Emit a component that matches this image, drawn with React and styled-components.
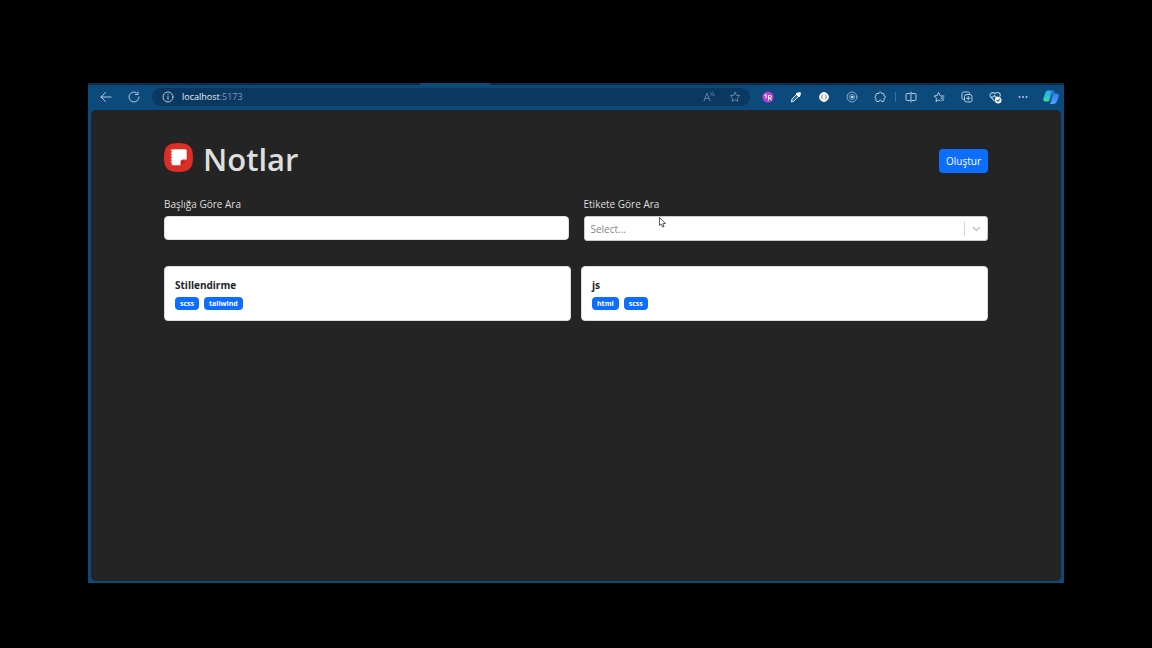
import React from "react";
import styled, { createGlobalStyle } from "styled-components";

const GlobalStyle = createGlobalStyle`
  * { box-sizing: border-box; }
  body {
    margin: 0;
    background: #000;
    font-family: "Open Sans", "Noto Sans", sans-serif;
  }
  button, input, select { font-family: inherit; }
`;

const Desktop = styled.div`
  display: flex;
  flex-direction: column;
  min-height: 100vh;
  padding: 83px 88px 65px;
`;

const BrowserWindow = styled.div`
  flex: 1;
  display: flex;
  flex-direction: column;
  background: #0d4a7c;
`;

const TabStrip = styled.div`
  height: 2px;
  padding-left: 34%;
  background: #082c49;
`;

const ActiveTab = styled.div`
  width: 70px;
  height: 2px;
  background: #0d4a7c;
`;

const Toolbar = styled.div`
  display: flex;
  align-items: center;
  height: 24px;
  padding-left: 4px;
`;

const ToolButton = styled.button`
  display: flex;
  align-items: center;
  justify-content: center;
  width: ${(p) => p.$width || 28}px;
  height: 20px;
  padding: 0;
  border: 0;
  background: none;
  color: ${(p) => (p.$dim ? "#64839f" : "#b4cbe0")};
`;

const AddressBar = styled.div`
  flex: 1;
  display: flex;
  align-items: center;
  height: 18px;
  margin: 0 4px;
  padding: 0 1px 0 2px;
  border-radius: 9px;
  background: #0a3860;
`;

const Address = styled.div`
  flex: 1;
  color: #7f9bb5;
  font-size: 9px;
  line-height: 16px;
  span { color: #e6eef6; }
`;

const Divider = styled.span`
  width: 1px;
  height: 10px;
  margin: 0 1px;
  background: #3e6f9b;
`;

const Page = styled.main`
  flex: 1;
  margin: 1px 3px 2px;
  padding: 33px 73px;
  border-radius: 5px;
  background: #242424;
`;

const Header = styled.header`
  display: flex;
  align-items: flex-start;
  justify-content: space-between;
  height: 36px;
`;

const Title = styled.h1`
  display: flex;
  align-items: flex-start;
  gap: 10px;
  margin: 0;
  color: #dedede;
  font-size: 31px;
  line-height: 32px;
  font-weight: 600;
`;

const CreateButton = styled.button`
  align-self: center;
  height: 24px;
  padding: 0 7px;
  border: 0;
  border-radius: 4px;
  background: #0d6efd;
  color: #fff;
  font-size: 10px;
`;

const Filters = styled.form`
  display: grid;
  grid-template-columns: 1fr 1fr;
  gap: 15px;
  margin-top: 17px;
`;

const Field = styled.div`
  display: flex;
  flex-direction: column;
  gap: 4px;
`;

const Label = styled.label`
  color: #dedede;
  font-size: 10px;
  line-height: 16px;
`;

const TextInput = styled.input`
  width: 100%;
  height: 24px;
  padding: 0 8px;
  border: 1px solid #dee2e6;
  border-radius: 4px;
  background: #fff;
  font-size: 10px;
`;

const SelectBox = styled.div`
  position: relative;
  display: flex;
  align-items: center;
  height: 25px;
  border: 1px solid #ccc;
  border-radius: 3px;
  background: #fff;
`;

const TagSelect = styled.select`
  flex: 1;
  height: 23px;
  padding: 0 6px;
  border: 0;
  outline: 0;
  appearance: none;
  background: none;
  color: #858585;
  font-size: 10px;
`;

const SelectArrow = styled.span`
  display: flex;
  align-items: center;
  justify-content: center;
  width: 23px;
  height: 14px;
  border-left: 1px solid #d4d4d4;
  color: #c4c4c4;
`;

const Pointer = styled.svg`
  position: absolute;
  left: 74px;
  top: 0;
`;

const Notes = styled.section`
  display: grid;
  grid-template-columns: 1fr 1fr;
  gap: 10px;
  margin-top: 25px;
`;

const Card = styled.article`
  padding: 10px;
  border: 1px solid #dcdcdc;
  border-radius: 4px;
  background: #fff;
`;

const CardTitle = styled.h2`
  margin: 0;
  color: #212529;
  font-size: 10px;
  line-height: 16px;
  font-weight: 700;
`;

const Tags = styled.div`
  display: flex;
  gap: 5px;
  margin-top: 4px;
`;

const Badge = styled.span`
  padding: 0 5px;
  border-radius: 4px;
  background: #0d6efd;
  color: #fff;
  font-size: 7px;
  line-height: 13px;
  font-weight: 700;
`;

const Icon = ({ children, size = 12 }) => (
  <svg width={size} height={size} viewBox="0 0 24 24" fill="none" stroke="currentColor" strokeWidth="2" strokeLinecap="round" strokeLinejoin="round" aria-hidden="true">
    {children}
  </svg>
);

const star = "M12 2.500l2.900 6 6.600 .9-4.800 4.600 1.200 6.600L12 17.400l-5.900 3.200 1.200-6.600L2.500 9.400l6.600-.9z";

const extensions = [
  {
    label: "Dil aracı",
    icon: (
      <Icon>
        <circle cx="12" cy="12" r="11" fill="#b63fd6" stroke="none" />
        <path d="M5 9l3-3v8M13 18V9h3c4 0 4 5 0 5h-3M16 14l3 4" stroke="#fff" />
      </Icon>
    ),
  },
  {
    label: "Renk seçici",
    icon: (
      <Icon>
        <path d="M3 21l1-5L14 6l4 4L8 20z" fill="#2c66b4" stroke="#e4eefa" />
        <path d="M15 6l3 3M17 7l2-2" stroke="#fff" strokeWidth="6" />
      </Icon>
    ),
  },
  {
    label: "JSON görüntüleyici",
    icon: (
      <Icon>
        <circle cx="12" cy="12" r="9" fill="#fff" stroke="#e8e8e8" />
        <path d="M9 8c-2 2-2 6 0 8M15 8c2 2 2 6 0 8" stroke="#888" />
      </Icon>
    ),
  },
  {
    label: "React araçları",
    icon: (
      <Icon>
        <circle cx="12" cy="12" r="10" stroke="#8bacc8" />
        <circle cx="12" cy="12" r="5.500" stroke="#6f97b9" />
        <circle cx="12" cy="12" r="2" fill="#c9dcec" stroke="#c9dcec" />
      </Icon>
    ),
  },
  {
    label: "Uzantılar",
    icon: (
      <Icon>
        <path d="M6 5h4c-1-4 6-4 5 0h3q2 0 2 2v3c3.500-1 3.500 5 0 4.500V19q0 2-2 2h-3c0-4-5-4-5 0H6q-2 0-2-2v-4c-3 0-3-5 0-5V7q0-2 2-2z" />
      </Icon>
    ),
  },
];

const browserTools = [
  { label: "Bölünmüş ekran", icon: <Icon><path d="M10 5H4q-2 0-2 2v10q0 2 2 2h6M14 5h6q2 0 2 2v10q0 2-2 2h-6M12 2v20" /></Icon> },
  { label: "Sık kullanılanlar", icon: <Icon><path d="M14 9l-3-6-2.500 6L2 10l5 4.500L6 21l5-3 3 1.500M16 10h6M16 14h6M17 18h4" /></Icon> },
  {
    label: "Koleksiyonlar",
    icon: (
      <Icon>
        <path d="M5 17c-2 0-3-1-3-3V5c0-2 1-3 3-3h9c2 0 3 1 3 3" />
        <rect x="7" y="7" width="15" height="15" rx="4" />
        <path d="M14.500 11v7M11 14.500h7" />
      </Icon>
    ),
  },
  {
    label: "Tarayıcı temelleri",
    icon: (
      <Icon size={13}>
        <path d="M10 18l-7-7C-1 6 6 0 11 5c5-5 12 0 9 5M3 11h5l2-3 3 5 2-3" />
        <circle cx="17" cy="17" r="6" fill="#fff" stroke="none" />
        <path d="M14.500 17l2 2 3.500-4" stroke="#315d85" />
      </Icon>
    ),
  },
  {
    label: "Ayarlar",
    icon: (
      <Icon>
        <g fill="currentColor" stroke="none">
          <circle cx="5" cy="12" r="2" />
          <circle cx="12" cy="12" r="2" />
          <circle cx="19" cy="12" r="2" />
        </g>
      </Icon>
    ),
  },
];

const CopilotIcon = () => (
  <svg width="16" height="16" viewBox="0 0 32 32" aria-hidden="true">
    <defs>
      <linearGradient id="copilotLeft" x1="0" y1="0" x2="0" y2="1">
        <stop offset="0" stopColor="#30a8ee" />
        <stop offset="0.600" stopColor="#22cdc0" />
        <stop offset="1" stopColor="#4fd68c" />
      </linearGradient>
      <linearGradient id="copilotRight" x1="0" y1="0" x2="0" y2="1">
        <stop offset="0" stopColor="#2f7fe8" />
        <stop offset="1" stopColor="#4da4ff" />
      </linearGradient>
    </defs>
    <path d="M9 3h10l-5 18q-1 4-5 4H5q-6 0-4-7l3-9q2-6 5-6z" fill="url(#copilotLeft)" />
    <path d="M17 3h2q4 0 5 6h-3q-3 0-4 4l-3 9h-2z" fill="#2a78d8" />
    <path d="M20 9h7q6 0 4 7l-3 8q-2 6-6 6h-9q2-1 3-5z" fill="url(#copilotRight)" />
  </svg>
);

const LogoIcon = () => (
  <svg width="29" height="29" viewBox="0 0 30 30" aria-hidden="true">
    <path d="M15 0C26 0 30 4 30 15S26 30 15 30 0 26 0 15 4 0 15 0z" fill="#dc2d27" />
    <path d="M9 6.500h13q1.500 0 1.500 1.500v9h-3.500q-3 0-3 3v3H9q-1 0-1-1v-2h-1v-1h1v-2H7v-1h1v-2H7v-1h1v-2H7v-1h1V8H7V7h1q0-.5 1-.5z" fill="#fff" />
    <path d="M18 22.500v-2q0-2 2-2h3z" fill="#b9211e" />
  </svg>
);

const notes = [
  { title: "Stillendirme", tags: ["scss", "tailwind"] },
  { title: "js", tags: ["html", "scss"] },
];

export default function App() {
  return (
    <Desktop>
      <GlobalStyle />
      <BrowserWindow>
        <TabStrip><ActiveTab /></TabStrip>
        <Toolbar>
          <ToolButton aria-label="Geri"><Icon><path d="M22 12H2M11 3l-9 9 9 9" /></Icon></ToolButton>
          <ToolButton aria-label="Yenile"><Icon><path d="M17 3.300A10 10 0 1 0 22 12M15 7h5V2" /></Icon></ToolButton>
          <AddressBar>
            <ToolButton aria-label="Site bilgileri"><Icon><circle cx="12" cy="12" r="10" /><path d="M12 11v6M12 7v1" /></Icon></ToolButton>
            <Address><span>localhost</span>:5173</Address>
            <ToolButton $dim $width={24} aria-label="Sesli oku">
              <Icon><path d="M2 20L8 4l6 16M4 15h8M15 4c2 1 3 3 3 5M18 2c3 2 4 4 4 7" /></Icon>
            </ToolButton>
            <ToolButton $dim aria-label="Sık kullanılanlara ekle"><Icon><path d={star} /></Icon></ToolButton>
          </AddressBar>
          {extensions.map((tool) => (
            <ToolButton key={tool.label} aria-label={tool.label}>{tool.icon}</ToolButton>
          ))}
          <Divider />
          {browserTools.map((tool) => (
            <ToolButton key={tool.label} aria-label={tool.label}>{tool.icon}</ToolButton>
          ))}
          <ToolButton $width={27} aria-label="Copilot"><CopilotIcon /></ToolButton>
        </Toolbar>
        <Page>
          <Header>
            <Title><LogoIcon />Notlar</Title>
            <CreateButton type="button">Oluştur</CreateButton>
          </Header>
          <Filters>
            <Field>
              <Label htmlFor="title">Başlığa Göre Ara</Label>
              <TextInput id="title" type="text" />
            </Field>
            <Field>
              <Label htmlFor="tag">Etikete Göre Ara</Label>
              <SelectBox>
                <TagSelect id="tag" defaultValue="">
                  <option value="">Select...</option>
                </TagSelect>
                <SelectArrow>
                  <svg width="9" height="6" viewBox="0 0 9 6" fill="none" stroke="currentColor" strokeWidth="1.500" aria-hidden="true">
                    <path d="M1 1l3.500 3.500L8 1" />
                  </svg>
                </SelectArrow>
                <Pointer width="7" height="11" viewBox="0 0 7 11" aria-hidden="true">
                  <path d="M.5 .5v8l2-1.500 1 3 1.500-.5-1-3h2.500z" fill="#fff" stroke="#333" strokeWidth=".8" />
                </Pointer>
              </SelectBox>
            </Field>
          </Filters>
          <Notes>
            {notes.map((note) => (
              <Card key={note.title}>
                <CardTitle>{note.title}</CardTitle>
                <Tags>{note.tags.map((tag) => <Badge key={tag}>{tag}</Badge>)}</Tags>
              </Card>
            ))}
          </Notes>
        </Page>
      </BrowserWindow>
    </Desktop>
  );
}
